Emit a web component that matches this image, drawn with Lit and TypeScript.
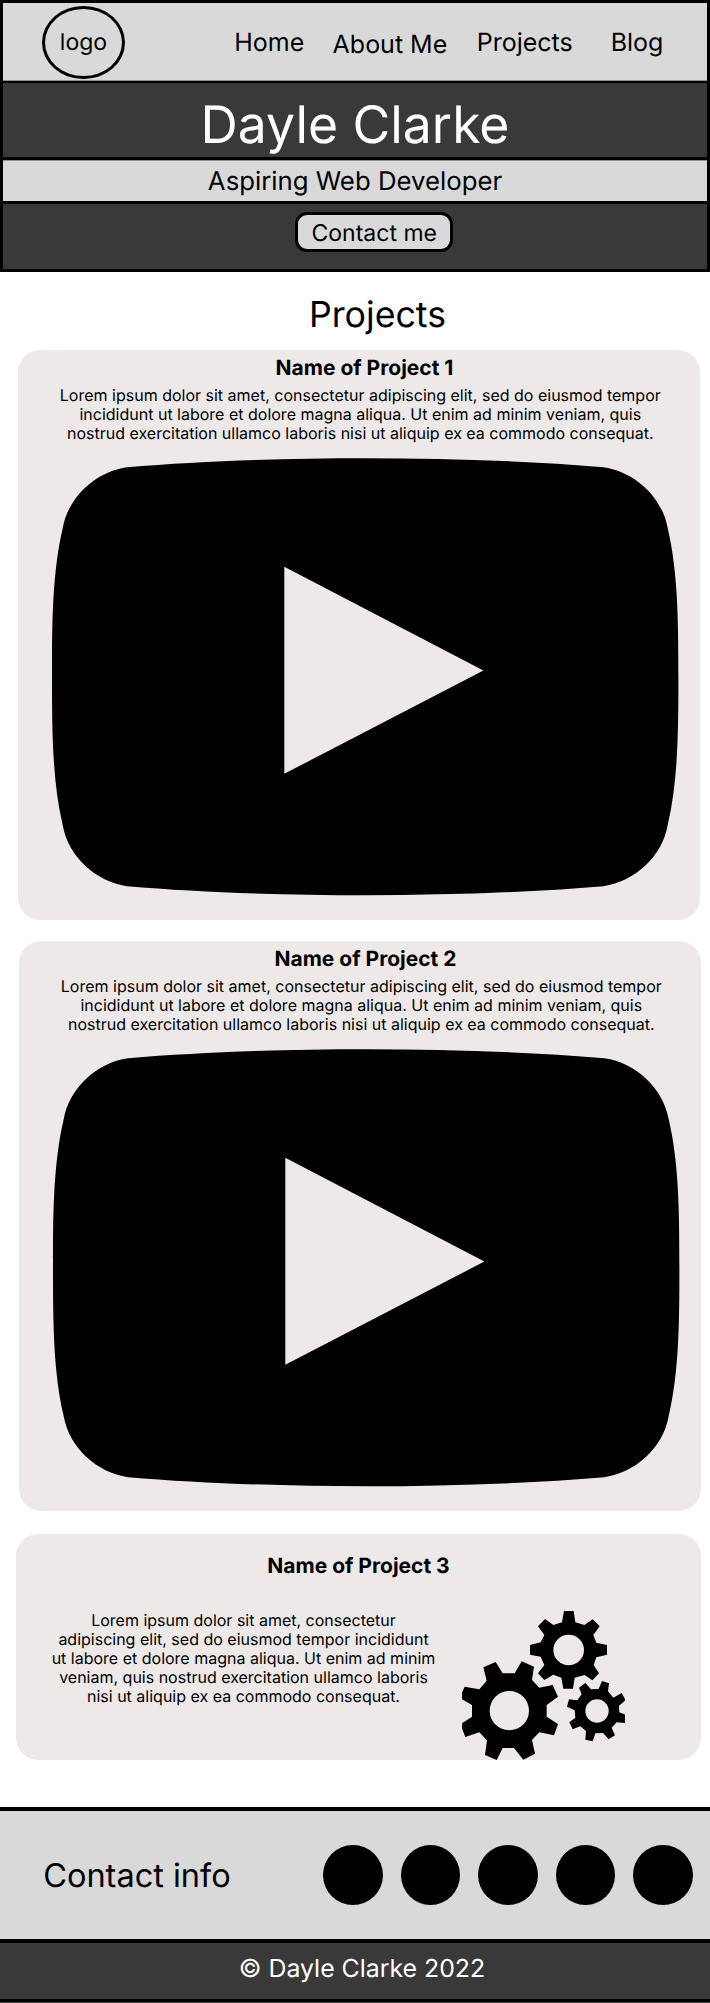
import { LitElement, html, css, svg } from "lit";
import { customElement, property } from "lit/decorators.js";
import { classMap } from "lit/directives/class-map.js";

const WIDE_LINES = [
  "Lorem ipsum dolor sit amet, consectetur adipiscing elit, sed do eiusmod tempor",
  "incididunt ut labore et dolore magna aliqua. Ut enim ad minim veniam, quis",
  "nostrud exercitation ullamco laboris nisi ut aliquip ex ea commodo consequat.",
];

const NARROW_LINES = [
  "Lorem ipsum dolor sit amet, consectetur",
  "adipiscing elit, sed do eiusmod tempor incididunt",
  "ut labore et dolore magna aliqua. Ut enim ad minim",
  "veniam, quis nostrud exercitation ullamco laboris",
  "nisi ut aliquip ex ea commodo consequat.",
];

const BIG_GEAR =
  "M100 232L137 216L158 250L194 250L215 214L252 230L246 270L268 293L308 285L324 320L290 345L290 380L324 402L312 436L268 427L246 450L255 491L220 509L192 474L158 474L140 510L105 495L111 451L88 427L46 441L31 403L66 380L66 345L28 323L44 290L88 298L110 272Z" +
  "M119 362a59 59 0 1 0 118 0a59 59 0 1 0 -118 0Z";
const TOP_GEAR =
  "M342 63L371 63L376 97L403 105L428 88L449 109L430 135L439 158L471 165L471 194L439 202L431 225L447 250L427 271L404 255L374 263L369 296L340 296L334 263L310 254L283 270L264 250L283 225L272 200L240 194L240 165L272 157L283 135L264 109L285 87L310 105L336 97Z" +
  "M310 180a46 46 0 1 0 92 0a46 46 0 1 0 -92 0Z";
const SMALL_GEAR =
  "M456 273L477 280L474 304L490 323L515 309L527 331L507 347L508 367L532 376L528 399L500 397L485 413L495 436L476 448L459 429L436 430L428 454L406 449L408 423L391 409L368 418L358 397L376 383L374 361L351 350L357 328L382 331L395 313L387 293L406 279L423 298L446 297Z" +
  "M406 363a35 35 0 1 0 70 0a35 35 0 1 0 -70 0Z";

const VIDEO =
  "M52 676.7C52 620 52.5 572 62.7 528.3C68 497 96 471.5 127 467.2C200 461 285 458.2 365.2 458.2C445.4 458.2 530.4 461 603.4 467.2C634.4 471.5 662.4 497 667.7 528.3C677.9 572 678.4 620 678.4 676.7C678.4 733.4 677.9 781.4 667.7 825.1C662.4 856.4 634.4 881.9 603.4 886.2C530.4 892.4 445.4 895.2 365.2 895.2C285 895.2 200 892.4 127 886.2C96 881.9 68 856.4 62.7 825.1C52.5 781.4 52 733.4 52 676.7Z" +
  "M284.3 566.7L483.4 670.5L284.3 773.8Z";

@customElement("project-card")
export class ProjectCard extends LitElement {
  @property() name = "";
  @property() variant = "video";

  static styles = css`
    :host {
      display: block;
      color: #000;
    }
    .card {
      box-sizing: border-box;
      background: #ede9e8;
      border-radius: 22px;
      overflow: hidden;
    }
    .video {
      width: 682px;
      height: 570px;
      padding-top: 5.5px;
    }
    .gears {
      width: 685px;
      height: 226px;
      padding-top: 20px;
    }
    h3 {
      margin: 0;
      font-size: 21px;
      line-height: 26px;
      font-weight: 700;
      text-align: center;
    }
    .video h3 {
      padding-left: 11px;
    }
    p {
      margin: 0;
      font-size: 16px;
      line-height: 19px;
      text-align: center;
      white-space: nowrap;
    }
    p span {
      display: block;
    }
    .video p {
      padding: 4.5px 0 14px 2.6px;
    }
    .video svg {
      display: block;
      margin-left: 33px;
    }
    .row {
      display: flex;
      gap: 18.5px;
      margin-top: 31px;
      padding-left: 27.5px;
    }
    .row p {
      width: 400px;
    }
  `;

  render() {
    const isVideo = this.variant === "video";
    const lines = (isVideo ? WIDE_LINES : NARROW_LINES).map((l) => html`<span>${l}</span>`);
    return html`<article class=${classMap({ card: true, video: isVideo, gears: !isVideo })}>
      <h3>${this.name}</h3>
      ${isVideo
        ? html`<p>${lines}</p>
            <svg width="629" height="440" viewBox="51 457 629 440">
              ${svg`<path fill-rule="evenodd" d=${VIDEO} />`}
            </svg>`
        : html`<div class="row">
            <p>${lines}</p>
            <svg width="163" height="149" viewBox="36 63 489 447">
              ${[BIG_GEAR, TOP_GEAR, SMALL_GEAR].map((d) => svg`<path fill-rule="evenodd" d=${d} />`)}
            </svg>
          </div>`}
    </article>`;
  }
}

@customElement("app-root")
export class AppRoot extends LitElement {
  static styles = css`
    :host {
      display: block;
      width: 710px;
      height: 2003px;
      overflow: hidden;
      background: #fff;
      color: #000;
      font-family: Inter, "Liberation Sans", sans-serif;
      text-rendering: geometricPrecision;
    }
    header {
      box-sizing: border-box;
      height: 272px;
      border: 3px solid #000;
    }
    nav {
      box-sizing: border-box;
      display: flex;
      height: 78px;
      padding: 2.5px 0 0 39.3px;
      background: #d9d9d9;
      box-shadow: inset 0 -1px #8f9090;
    }
    .logo {
      box-sizing: border-box;
      display: flex;
      align-items: center;
      justify-content: center;
      width: 82.4px;
      height: 73px;
      border: 3px solid #000;
      border-radius: 50%;
      font-size: 23px;
      line-height: 28px;
    }
    .links {
      display: grid;
      grid-template-columns: 98.4px 144.1px 134px auto;
      margin-left: 109.5px;
      padding-top: 22.5px;
      font-size: 25px;
      line-height: 30px;
    }
    .drop {
      padding-top: 1.5px;
    }
    h1,
    h2,
    .tagline {
      margin: 0;
      font-weight: 400;
      text-align: center;
    }
    h1 {
      box-sizing: border-box;
      height: 76px;
      padding-top: 9px;
      border-top: 2px solid #000;
      background: #393939;
      color: #fff;
      font-size: 51.7px;
      line-height: 66px;
    }
    .tagline {
      height: 41px;
      border: solid #000;
      border-width: 3px 0;
      background: #d9d9d9;
      box-shadow: inset 0 1px #8f9090;
      font-size: 25.75px;
      line-height: 43px;
    }
    .action {
      box-sizing: border-box;
      display: flex;
      justify-content: center;
      height: 65px;
      padding: 8px 0 0 38px;
      background: #393939;
    }
    button {
      box-sizing: border-box;
      width: 158px;
      height: 40px;
      padding: 2px 0 0 0.5px;
      border: 3px solid #000;
      border-radius: 12px;
      background: #d9d9d9;
      color: #000;
      font: 23px/32px Inter, "Liberation Sans", sans-serif;
      text-rendering: inherit;
    }
    h2 {
      box-sizing: border-box;
      height: 78px;
      padding: 6px 0 0 45px;
      font-size: 35.7px;
      line-height: 72px;
    }
    .projects {
      display: flex;
      flex-direction: column;
      padding-left: 18px;
    }
    .second {
      margin: 21px 0 23px 1px;
    }
    .third {
      margin-left: -2px;
    }
    footer {
      margin-top: 47px;
      border-top: 4px solid #000;
    }
    .contact {
      display: flex;
      align-items: center;
      justify-content: space-between;
      height: 128px;
      padding: 0 17px 0 43.2px;
      background: #d9d9d9;
      font-size: 32.5px;
    }
    .dots {
      display: grid;
      grid-template-columns: 60px 59px 60px 59px 60px;
      gap: 18px;
    }
    .dot {
      height: 60px;
      border-radius: 50%;
      background: #000;
    }
    .copyright {
      height: 56px;
      padding-left: 14px;
      border: solid #000;
      border-width: 4px 0 3px;
      background: #393939;
      color: #fff;
      font-size: 24.85px;
      line-height: 51px;
      text-align: center;
    }
    .edge {
      height: 1px;
      background: #4c4c4c;
    }
  `;

  render() {
    return html`
      <header>
        <nav>
          <div class="logo">logo</div>
          <div class="links">
            <span>Home</span><span class="drop">About Me</span><span>Projects</span><span>Blog</span>
          </div>
        </nav>
        <h1>Dayle Clarke</h1>
        <div class="tagline">Aspiring Web Developer</div>
        <div class="action"><button>Contact me</button></div>
      </header>
      <main>
        <h2>Projects</h2>
        <div class="projects">
          <project-card name="Name of Project 1"></project-card>
          <project-card class="second" name="Name of Project 2"></project-card>
          <project-card class="third" name="Name of Project 3" variant="gears"></project-card>
        </div>
      </main>
      <footer>
        <div class="contact">
          <span>Contact info</span>
          <div class="dots">${[0, 1, 2, 3, 4].map(() => html`<div class="dot"></div>`)}</div>
        </div>
        <div class="copyright">© Dayle Clarke 2022</div>
        <div class="edge"></div>
      </footer>
    `;
  }
}
